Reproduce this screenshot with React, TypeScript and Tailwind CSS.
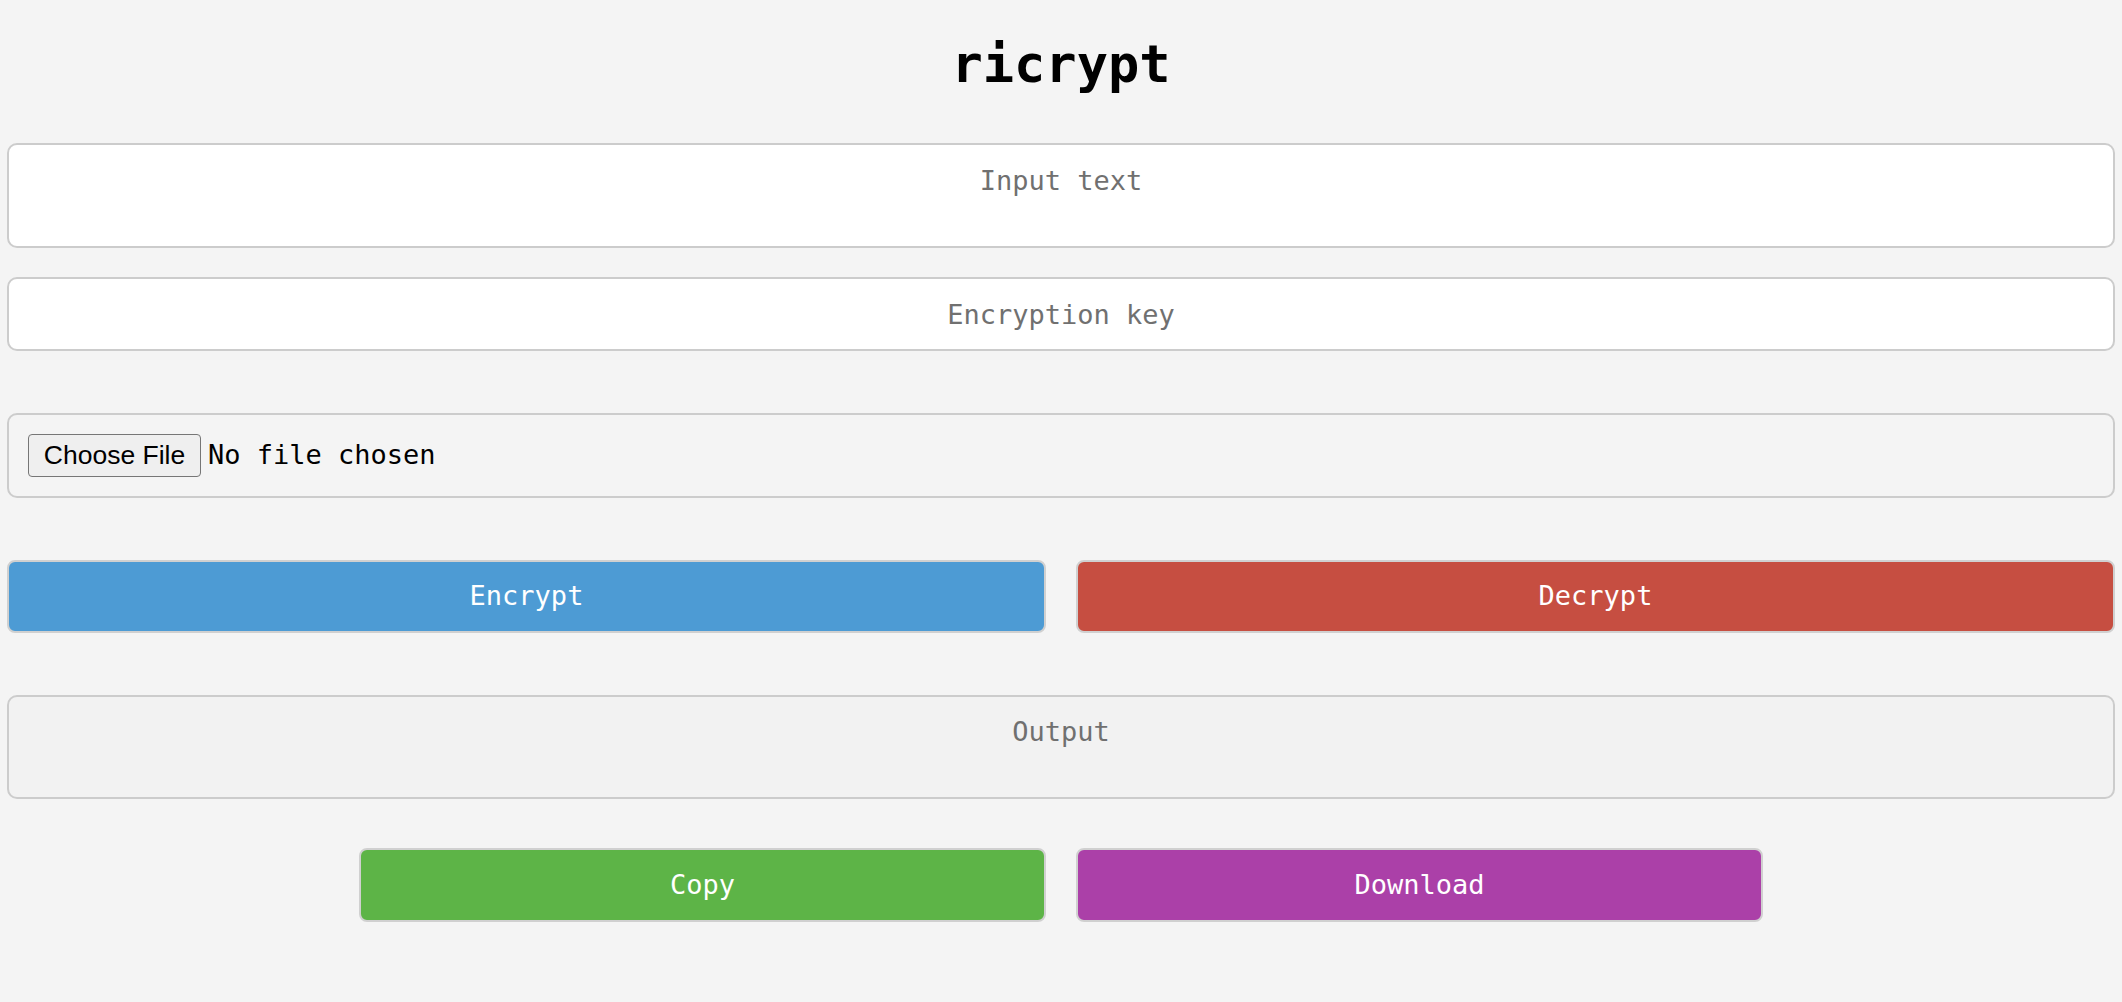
import React from 'react';

const mono = "font-['DejaVu_Sans_Mono',monospace]";

const App: React.FC = () => {
  return (
    <div className={`min-h-screen w-full bg-[#f4f4f4] px-[7px] ${mono} text-[27px] text-black`}>
      {/* Title */}
      <h1 className="pt-[34px] pb-[49px] text-center text-[52px] font-bold leading-[60px]">ricrypt</h1>

      {/* Input text */}
      <textarea
        placeholder="Input text"
        className="block h-[105px] w-full resize-none rounded-[10px] border-2 border-[#cccccc] bg-white px-4 pt-[20px] text-center leading-[32px] outline-none placeholder:text-[#707070]"
      />

      {/* Key */}
      <input
        type="text"
        placeholder="Encryption key"
        className="mt-[29px] block h-[74px] w-full rounded-[10px] border-2 border-[#cccccc] bg-white px-4 text-center outline-none placeholder:text-[#707070]"
      />

      {/* File picker */}
      <div className="mt-[62px] flex h-[85px] items-center gap-[7px] rounded-[10px] border-2 border-[#cccccc] px-[19px]">
        <span className="flex h-[43px] w-[173px] items-center justify-center rounded-[4px] border border-[#767676] bg-[#efefef] font-['Liberation_Sans',Arial,sans-serif] text-[26.5px]">
          Choose File
        </span>
        <span>No file chosen</span>
      </div>

      {/* Encrypt / Decrypt */}
      <div className="mt-[62px] grid grid-cols-2 gap-[30px]">
        <button className="flex h-[73px] items-center justify-center rounded-[8px] border-2 border-[#d0d0d0] bg-[#4d9bd4] text-white">
          Encrypt
        </button>
        <button className="flex h-[73px] items-center justify-center rounded-[8px] border-2 border-[#d0d0d0] bg-[#c64e41] text-white">
          Decrypt
        </button>
      </div>

      {/* Output */}
      <textarea
        readOnly
        placeholder="Output"
        className="mt-[62px] block h-[104px] w-full resize-none rounded-[10px] border-2 border-[#cccccc] bg-[#f2f2f2] px-4 pt-[19px] text-center leading-[32px] outline-none placeholder:text-[#707070]"
      />

      {/* Copy / Download */}
      <div className="mt-[49px] flex justify-center gap-[30px] pb-[40px]">
        <button className="flex h-[74px] w-[687px] items-center justify-center rounded-[8px] border-2 border-[#d0d0d0] bg-[#5db447] text-white">
          Copy
        </button>
        <button className="flex h-[74px] w-[687px] items-center justify-center rounded-[8px] border-2 border-[#d0d0d0] bg-[#ab40a8] text-white">
          Download
        </button>
      </div>
    </div>
  );
};

export default App;
